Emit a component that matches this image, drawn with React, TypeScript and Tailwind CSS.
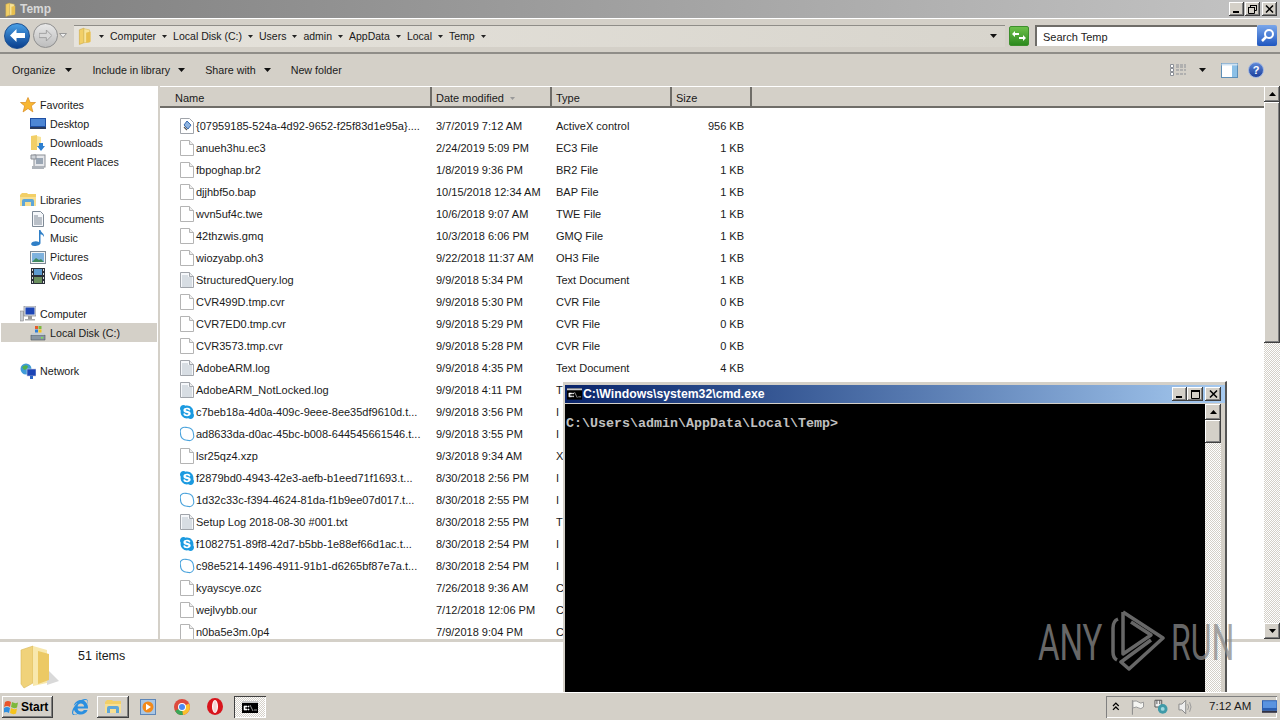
import React from "react";
import { FaSkype, FaInternetExplorer } from "react-icons/fa";

const raised = "shadow-[inset_-1px_-1px_0_#404040,inset_1px_1px_0_#ffffff,inset_-2px_-2px_0_#808080]";
const checker = "bg-[repeating-conic-gradient(#d4d0c8_0_25%,#ffffff_0_50%)] bg-[length:2px_2px]";

const Caret = ({ className = "" }: { className?: string }) => (
  <svg width="7" height="4" viewBox="0 0 7 4" className={"shrink-0 " + className}><path d="M0 0h7L3.5 4z" fill="#111" /></svg>
);
const SmallCaret = () => (
  <svg width="5" height="3" viewBox="0 0 5 3" className="shrink-0"><path d="M0 0h5L2.5 3z" fill="#222" /></svg>
);

const Folder = ({ size = 16 }: { size?: number }) => (
  <svg width={size} height={size} viewBox="0 0 16 16" className="shrink-0">
    <path d="M3 2.500 L7 1 V14 L3 15.500z" fill="#f2cf67" stroke="#c9a63e" strokeWidth=".5" />
    <path d="M7 1.500 L12 2.500 V13.500 L7 14z" fill="#f8e49a" stroke="#d7b755" strokeWidth=".5" />
    <path d="M9 5 L13 4 V13 L9 14z" fill="#e8bf4e" />
  </svg>
);

const BlankFile = () => (
  <svg width="14" height="16" viewBox="0 0 14 16" className="shrink-0">
    <path d="M.5.5h9l4 4v11H.5z" fill="#fff" stroke="#b4b4b4" />
    <path d="M9.500.5v4h4" fill="#eee" stroke="#b4b4b4" />
  </svg>
);
const TextFile = () => (
  <svg width="14" height="16" viewBox="0 0 14 16" className="shrink-0">
    <path d="M.5.5h9l4 4v11H.5z" fill="#f6f8fb" stroke="#a0a4aa" />
    <path d="M9.500.5v4h4" fill="#eee" stroke="#a0a4aa" />
    <path d="M2 4h6M2 6h10M2 8h10M2 10h10M2 12h10M2 14h10" stroke="#a9b4c0" strokeWidth=".8" />
  </svg>
);
const ActiveX = () => (
  <svg width="14" height="16" viewBox="0 0 14 16" className="shrink-0">
    <path d="M.5.5h9l4 4v11H.5z" fill="#fff" stroke="#a0a4aa" />
    <path d="M7 3l4 4-3 4-4-4z" fill="#8fb4e0" stroke="#3b6db0" />
    <path d="M4 9l3 3" stroke="#555" strokeWidth="1.200" />
  </svg>
);
const SkypeHollow = () => (
  <svg width="16" height="16" viewBox="0 0 16 16" className="shrink-0">
    <path d="M4 1.500C6 .8 7 1.500 8 1.500c4 0 6.500 3 6.500 6.500 0 1 .5 2 .2 3-.5 2.500-3 4-5 3.500-.7-.1-1.200-.3-1.700-.3-4 0-6.500-3-6.500-6.500 0-1-.5-1.500-.3-3C1.400 3 2.500 2 4 1.500z" fill="#fff" stroke="#4aa3dc" strokeWidth="1.100" />
  </svg>
);
const Skype = () => <FaSkype size={16} className="shrink-0 text-[#1b9ae0]" />;

type Icon = "blank" | "text" | "activex" | "skype" | "hollow";
const iconFor: Record<Icon, React.ReactNode> = {
  blank: <BlankFile />, text: <TextFile />, activex: <ActiveX />, skype: <Skype />, hollow: <SkypeHollow />,
};

const files: [Icon, string, string, string, string][] = [
  ["activex", "{07959185-524a-4d92-9652-f25f83d1e95a}....", "3/7/2019 7:12 AM", "ActiveX control", "956 KB"],
  ["blank", "anueh3hu.ec3", "2/24/2019 5:09 PM", "EC3 File", "1 KB"],
  ["blank", "fbpoghap.br2", "1/8/2019 9:36 PM", "BR2 File", "1 KB"],
  ["blank", "djjhbf5o.bap", "10/15/2018 12:34 AM", "BAP File", "1 KB"],
  ["blank", "wvn5uf4c.twe", "10/6/2018 9:07 AM", "TWE File", "1 KB"],
  ["blank", "42thzwis.gmq", "10/3/2018 6:06 PM", "GMQ File", "1 KB"],
  ["blank", "wiozyabp.oh3", "9/22/2018 11:37 AM", "OH3 File", "1 KB"],
  ["text", "StructuredQuery.log", "9/9/2018 5:34 PM", "Text Document", "1 KB"],
  ["blank", "CVR499D.tmp.cvr", "9/9/2018 5:30 PM", "CVR File", "0 KB"],
  ["blank", "CVR7ED0.tmp.cvr", "9/9/2018 5:29 PM", "CVR File", "0 KB"],
  ["blank", "CVR3573.tmp.cvr", "9/9/2018 5:28 PM", "CVR File", "0 KB"],
  ["text", "AdobeARM.log", "9/9/2018 4:35 PM", "Text Document", "4 KB"],
  ["text", "AdobeARM_NotLocked.log", "9/9/2018 4:11 PM", "T", ""],
  ["skype", "c7beb18a-4d0a-409c-9eee-8ee35df9610d.t...", "9/9/2018 3:56 PM", "I", ""],
  ["hollow", "ad8633da-d0ac-45bc-b008-644545661546.t...", "9/9/2018 3:55 PM", "I", ""],
  ["blank", "lsr25qz4.xzp", "9/3/2018 9:34 AM", "X", ""],
  ["skype", "f2879bd0-4943-42e3-aefb-b1eed71f1693.t...", "8/30/2018 2:56 PM", "I", ""],
  ["hollow", "1d32c33c-f394-4624-81da-f1b9ee07d017.t...", "8/30/2018 2:55 PM", "I", ""],
  ["text", "Setup Log 2018-08-30 #001.txt", "8/30/2018 2:55 PM", "T", ""],
  ["skype", "f1082751-89f8-42d7-b5bb-1e88ef66d1ac.t...", "8/30/2018 2:54 PM", "I", ""],
  ["hollow", "c98e5214-1496-4911-91b1-d6265bf87e7a.t...", "8/30/2018 2:54 PM", "I", ""],
  ["blank", "kyayscye.ozc", "7/26/2018 9:36 AM", "C", ""],
  ["blank", "wejlvybb.our", "7/12/2018 12:06 PM", "C", ""],
  ["blank", "n0ba5e3m.0p4", "7/9/2018 9:04 PM", "C", ""],
];

const crumbs = ["Computer", "Local Disk (C:)", "Users", "admin", "AppData", "Local", "Temp"];

const Star = () => (
  <svg width="16" height="16" viewBox="0 0 16 16"><path d="M8 .5l2.200 5h5.300l-4.200 3.400 1.600 6-4.900-3.400-4.900 3.400 1.600-6L.5 5.500h5.300z" fill="#f8b733" stroke="#d98a1e" strokeWidth=".7" /></svg>
);
const DesktopI = () => (
  <svg width="16" height="16" viewBox="0 0 16 16"><rect x="0" y="2" width="16" height="11" fill="#1f4fa3" /><rect x="1" y="3" width="14" height="7" fill="#4d86d4" /><rect x="0" y="11" width="16" height="2" fill="#2b3b5c" /></svg>
);
const Downloads = () => (
  <svg width="16" height="16" viewBox="0 0 16 16"><path d="M1 1l6-1v15H1z" fill="#f2cf67" /><path d="M7 1l4 1v10H7z" fill="#f8e49a" /><path d="M9 8h4v3h2l-4 5-4-5h2z" fill="#2d7fd0" /></svg>
);
const Recent = () => (
  <svg width="16" height="16" viewBox="0 0 16 16"><rect x="4" y="1" width="11" height="12" fill="#e4e6ea" stroke="#8b8f96" /><rect x="6" y="4" width="7" height="6" fill="#9aa6b4" /><path d="M1 1h5v4H1z" fill="#cfd3d8" stroke="#8b8f96" /><rect x="2" y="12" width="12" height="3" fill="#aeb3ba" /></svg>
);
const Libraries = () => (
  <svg width="16" height="16" viewBox="0 0 16 16"><path d="M0 3l2-2h5l1 1h8v3H0z" fill="#f2cf67" /><path d="M0 5h16v9H0z" fill="#f7df93" /><path d="M2 14V9q0-2 2-2h8q2 0 2 2v5h-3v-4H5v4z" fill="#5ea6d8" /></svg>
);
const Documents = () => (
  <svg width="16" height="16" viewBox="0 0 16 16"><path d="M2.500.5h8l3 3v12h-11z" fill="#f5f7fa" stroke="#7f8a96" /><path d="M4 5h4M4 7h8M4 9h8M4 11h8M4 13h8" stroke="#5f6d7c" strokeWidth=".8" /></svg>
);
const Music = () => (
  <svg width="16" height="16" viewBox="0 0 16 16"><path d="M9 0h1.500c.5 3 4 3 3.500 7-.8-1.500-2-2.500-3.500-2.700V13c0 2-3 3-6 3-3 0-4-1.500-3-3 1-1.500 4.500-2.500 7.500-1z" fill="#2f7fc7" /></svg>
);
const Pictures = () => (
  <svg width="16" height="16" viewBox="0 0 16 16"><rect x=".5" y="2.500" width="15" height="12" fill="#f1f3f5" stroke="#7f8a96" /><rect x="2" y="4" width="12" height="9" fill="#7fb2de" /><path d="M2 13l4-4 3 2 2-1 3 3z" fill="#3f8a5e" /></svg>
);
const Videos = () => (
  <svg width="16" height="16" viewBox="0 0 16 16"><rect x="1" y="0" width="14" height="16" fill="#2a2f38" /><rect x="4" y="1" width="8" height="6" fill="#5d9bd0" /><rect x="4" y="9" width="8" height="6" fill="#6a8f5e" /><path d="M2 1h1v2H2zM2 5h1v2H2zM2 9h1v2H2zM2 13h1v2H2zM13 1h1v2h-1zM13 5h1v2h-1zM13 9h1v2h-1zM13 13h1v2h-1z" fill="#ddd" /></svg>
);
const ComputerI = () => (
  <svg width="16" height="16" viewBox="0 0 16 16"><rect x="0" y="5" width="3.500" height="10" fill="#c9ccd1" stroke="#777" strokeWidth=".5" /><rect x="4" y="0" width="12" height="10" fill="#dfe2e6" stroke="#6d7075" strokeWidth=".6" /><rect x="5.500" y="1.500" width="9" height="7" fill="#1c45b6" /><rect x="8" y="10" width="4" height="3" fill="#999" /><rect x="5" y="13" width="10" height="1.500" fill="#aaa" /></svg>
);
const Disk = () => (
  <svg width="16" height="16" viewBox="0 0 16 16"><path d="M1 10h14v5H1z" fill="#8a97a3" stroke="#4b5560" strokeWidth=".6" /><path d="M2 8h12l1 2H1z" fill="#c4ccd3" /><rect x="5" y="1" width="3" height="3" fill="#e85a2a" /><rect x="8.500" y="1" width="3" height="3" fill="#7db83c" /><rect x="5" y="4.500" width="3" height="3" fill="#2f7fd8" /><rect x="8.500" y="4.500" width="3" height="3" fill="#f3c21c" /><rect x="11" y="12" width="2" height="1.500" fill="#7de05a" /></svg>
);
const NetworkI = () => (
  <svg width="16" height="16" viewBox="0 0 16 16"><circle cx="6" cy="6" r="5.500" fill="#3f9bd8" /><path d="M2 4q3-3 6-1l-1 3-3 1z" fill="#4fb04f" /><rect x="7" y="6" width="9" height="7" fill="#1c45b6" stroke="#ccd" strokeWidth=".6" /><rect x="10" y="13" width="3" height="3" fill="#2a66c8" /></svg>
);

const Nav = ({ icon, label, group, active }: { icon: React.ReactNode; label: string; group?: boolean; active?: boolean }) => (
  <div className={"h-[19px] flex items-center gap-1 " + (group ? "pl-5" : active ? "pl-[29px] bg-[#d4d0c8] mx-px" : "pl-[30px]")}>
    <span className="w-4 h-4 shrink-0">{icon}</span>
    <span className="whitespace-nowrap pt-px text-[10.7px]">{label}</span>
  </div>
);

const WinBtn = ({ children, w = "w-[15px]" }: { children: React.ReactNode; w?: string }) => (
  <div className={"h-[14px] bg-[#d4d0c8] flex items-center justify-center " + w + " " + raised}>{children}</div>
);
const MinG = () => <div className="w-[6px] h-[2px] bg-black mt-[6px] -ml-[1px]" />;
const RestoreG = () => (
  <svg width="9" height="9" viewBox="0 0 9 9"><path d="M2.500 2V.5h6v5H7M.5 2.500h6v6h-6z" fill="none" stroke="#000" /><path d="M0 2h7v1H0zM2 0h7v1H2z" /></svg>
);
const MaxG = () => (
  <svg width="9" height="9" viewBox="0 0 9 9"><path d="M.5.5h8v8h-8z" fill="none" stroke="#000" /><path d="M0 0h9v2H0z" /></svg>
);
const CloseG = () => (
  <svg width="9" height="8" viewBox="0 0 9 8"><path d="M1 .5L8 7.500M8 .5L1 7.500" stroke="#000" strokeWidth="1.500" /></svg>
);
const ScrollUp = () => (
  <div className={"h-4 w-4 bg-[#d4d0c8] flex items-center justify-center " + raised}>
    <svg width="7" height="4" viewBox="0 0 7 4"><path d="M0 4h7L3.500 0z" /></svg>
  </div>
);
const ScrollDown = () => (
  <div className={"h-4 w-4 bg-[#d4d0c8] flex items-center justify-center " + raised}>
    <svg width="7" height="4" viewBox="0 0 7 4"><path d="M0 0h7L3.500 4z" /></svg>
  </div>
);

const Header = ({ label, w, sort, pad = "pl-[4px]" }: { label: string; w: string; sort?: boolean; pad?: string }) => (
  <div className={"h-full flex items-center pt-[3px] gap-[6px] border-r-2 border-r-[#6f6d68] " + pad + " " + w}>
    <span>{label}</span>
    {sort && <svg width="5" height="3" viewBox="0 0 5 3"><path d="M0 0h5L2.500 3z" fill="#999" /></svg>}
  </div>
);

const Chrome = () => (
  <svg width="16" height="16" viewBox="0 0 16 16">
    <circle cx="8" cy="8" r="8" fill="#dd4b3e" />
    <path d="M8 8L1 12a8 8 0 0 0 8 4z" fill="#3aa757" />
    <path d="M8 8l7-3.500A8 8 0 0 1 9 16z" fill="#fbc02d" />
    <circle cx="8" cy="8" r="4" fill="#fff" /><circle cx="8" cy="8" r="3" fill="#4a8af4" />
  </svg>
);
const Opera = () => (
  <svg width="16" height="17" viewBox="0 0 16 17">
    <ellipse cx="8" cy="8.500" rx="8" ry="8.500" fill="#d8141c" />
    <ellipse cx="8" cy="8.500" rx="3" ry="6.500" fill="#fff" />
    <ellipse cx="8" cy="8.500" rx="1.800" ry="5.500" fill="#f4d5d5" />
  </svg>
);
const Media = () => (
  <svg width="16" height="16" viewBox="0 0 16 16">
    <rect x=".5" y=".5" width="15" height="15" fill="#a9c6e4" stroke="#5d86b8" />
    <circle cx="8" cy="8" r="5.500" fill="#f28a1c" />
    <path d="M6 4.800v6.400L11 8z" fill="#fff" />
  </svg>
);
const WinFlag = () => (
  <svg width="17" height="16" viewBox="0 0 17 16" className="shrink-0">
    <path d="M1 3q3-2 6 0l-1 5q-3-2-6 0z" fill="#e9552b" />
    <path d="M8 3q3 2 6 .5l-1 5q-3 1.500-6-.5z" fill="#7db83c" />
    <path d="M0 9q3-2 6 0l-1 5q-3-2-6 0z" fill="#2f8fe0" />
    <path d="M7 9q3 2 6 .5l-1 5q-3 1.500-6-.5z" fill="#f5c31c" />
  </svg>
);
const CmdSmall = ({ w = 16, h = 12 }: { w?: number; h?: number }) => (
  <svg width={w} height={h} viewBox="0 0 16 12" className="shrink-0">
    <rect width="16" height="12" fill="#000" />
    <rect width="16" height="2" fill="#c8c8c8" />
    <path d="M2 5h3v1H3v2h2v1H2zM6 5h1v1H6zM6 8h1v1H6zM8 4l3 6M12 9h3" stroke="#fff" strokeWidth=".6" fill="#fff" />
  </svg>
);

export default function App() {
  return (
    <div className="relative w-[1280px] h-[720px] overflow-hidden flex flex-col bg-[#d4d0c8] text-[#1a1a1a] text-[11px] leading-none font-['Liberation_Sans',sans-serif]">
      {/* title bar */}
      <div className="h-[18px] shrink-0 flex items-center bg-gradient-to-r from-[#808080] to-[#c4c4c4]">
        <div className="w-[20px] flex justify-start pl-[3px]"><Folder size={15} /></div>
        <span className="font-bold text-[12px] text-[#d8d8d8]">Temp</span>
        <div className="ml-auto flex items-center mr-[3px]">
          <WinBtn><MinG /></WinBtn>
          <div className="w-px" />
          <WinBtn><RestoreG /></WinBtn>
          <div className="w-[2px]" />
          <WinBtn><CloseG /></WinBtn>
        </div>
      </div>

      {/* address bar */}
      <div className="h-[36px] shrink-0 flex items-center border-t border-t-[#fff] border-b-2 border-b-[#8f8d88] pl-[4px] pr-[3px]">
        <div className="w-[26px] h-[26px] rounded-full bg-gradient-to-b from-[#4aa0e6] to-[#0b3f8e] border border-[#1c4f90] flex items-center justify-center shrink-0">
          <svg width="15" height="13" viewBox="0 0 15 13"><path d="M0 6.500L6.500 0v4H15v5H6.500v4z" fill="#fff" /></svg>
        </div>
        <div className="w-[25px] h-[25px] rounded-full ml-[3px] bg-gradient-to-b from-[#e8e8e8] to-[#bdbdbd] border border-[#8f8f8f] flex items-center justify-center shrink-0">
          <svg width="13" height="11" viewBox="0 0 15 13"><path d="M15 6.500L8.500 0v4H0v5h8.500v4z" fill="#d8d8d8" stroke="#999" /></svg>
        </div>
        <svg width="8" height="5" viewBox="0 0 8 5" className="ml-[1px] mr-[7px] shrink-0"><path d="M.5.5h7L4 4.500z" fill="#eee" stroke="#999" /></svg>
        <div className="w-[931px] h-[22px] shrink-0 flex items-center border-t border-t-[#8f8d88] bg-gradient-to-r from-[#e6e3dc] to-[#d8d5cd] pl-[2px] pr-2">
          <Folder size={18} />
          <div className="flex items-center ml-[5px] gap-[6px]">
            {crumbs.map((c) => (
              <React.Fragment key={c}>
                <SmallCaret />
                <span className="pt-px whitespace-nowrap text-[10.5px]">{c}</span>
              </React.Fragment>
            ))}
            <SmallCaret />
          </div>
          <Caret className="ml-auto" />
        </div>
        <div className="w-[20px] h-[20px] ml-[4px] shrink-0 rounded-[2px] bg-gradient-to-b from-[#6cc04a] to-[#2c8a1e] border border-[#3d8f2c] flex items-center justify-center">
          <svg width="14" height="12" viewBox="0 0 14 12"><path d="M0 4l3-3v2h4v2H3v2zM14 8l-3 3V9H7V7h4V5z" fill="#fff" /></svg>
        </div>
        <div className="w-[222px] h-[21px] ml-[6px] shrink-0 bg-white flex items-center pl-[6px] pt-px border-t-2 border-l-2 border-t-[#6f6d68] border-l-[#6f6d68] text-[#222]">Search Temp</div>
        <div className="w-[20px] h-[21px] shrink-0 rounded-[2px] bg-gradient-to-b from-[#79a6ea] to-[#1f56c0] flex items-center justify-center">
          <svg width="15" height="15" viewBox="0 0 15 15"><circle cx="9" cy="6" r="4" fill="none" stroke="#fff" strokeWidth="2" /><path d="M6 9l-4 4" stroke="#fff" strokeWidth="2.500" /></svg>
        </div>
      </div>

      {/* toolbar */}
      <div className="h-[32px] shrink-0 flex items-center pl-3 pr-4 text-[10.7px]">
        <span className="pt-px">Organize</span><Caret className="ml-[10px] mr-[20px]" />
        <span className="pt-px">Include in library</span><Caret className="ml-[8px] mr-[20px]" />
        <span className="pt-px">Share with</span><Caret className="ml-[8px] mr-[20px]" />
        <span className="pt-px">New folder</span>
        <div className="ml-auto flex items-center">
          <svg width="16" height="14" viewBox="0 0 16 14"><path d="M.5 1.500h3v3h-3zM.5 5.500h3v3h-3zM.5 9.500h3v3h-3z" fill="#fff" stroke="#8b8f96" /><path d="M6 2h10M6 4h10M6 7h10M6 11h10" stroke="#8b8f96" strokeDasharray="3 1" /></svg>
          <Caret className="ml-[13px] mr-[15px]" />
          <svg width="17" height="15" viewBox="0 0 17 15"><rect x=".5" y=".5" width="16" height="14" fill="#fff" stroke="#5d8fb8" /><rect x="11" y="1" width="5" height="13" fill="#8cc0e6" /><rect x=".5" y=".5" width="16" height="2" fill="#cfe2f2" /></svg>
          <div className="w-[16px] h-[16px] ml-[10px] rounded-full bg-gradient-to-b from-[#5d87d8] to-[#1e3f9c] border border-[#9db4e0] text-white font-bold text-[11px] flex items-center justify-center">?</div>
        </div>
      </div>

      {/* main */}
      <div className="h-[553px] shrink-0 flex bg-white overflow-hidden">
        <div className="w-[158px] shrink-0 pt-[9px] flex flex-col">
          <Nav group icon={<Star />} label="Favorites" />
          <Nav icon={<DesktopI />} label="Desktop" />
          <Nav icon={<Downloads />} label="Downloads" />
          <Nav icon={<Recent />} label="Recent Places" />
          <div className="h-[19px]" />
          <Nav group icon={<Libraries />} label="Libraries" />
          <Nav icon={<Documents />} label="Documents" />
          <Nav icon={<Music />} label="Music" />
          <Nav icon={<Pictures />} label="Pictures" />
          <Nav icon={<Videos />} label="Videos" />
          <div className="h-[19px]" />
          <Nav group icon={<ComputerI />} label="Computer" />
          <Nav active icon={<Disk />} label="Local Disk (C:)" />
          <div className="h-[19px]" />
          <Nav group icon={<NetworkI />} label="Network" />
        </div>
        <div className="w-[2px] shrink-0 bg-[#d4d0c8]" />
        <div className="flex-1 min-w-0 flex flex-col">
          <div className="h-[22px] shrink-0 flex bg-[#d4d0c8] border-t border-t-white border-b-2 border-b-[#6f6d68] pl-[10px]">
            <Header label="Name" w="w-[262px]" pad="pl-[5px]" />
            <Header label="Date modified" w="w-[120px]" sort />
            <Header label="Type" w="w-[120px]" />
            <Header label="Size" w="w-[80px]" />
          </div>
          <div className="pt-[7px] overflow-hidden pl-[20px]">
            {files.map((f) => (
              <div key={f[1]} className="h-[22px] flex items-center">
                <div className="w-[256px] shrink-0 flex items-center gap-[2px] overflow-hidden whitespace-nowrap">
                  <span className="w-[14px] flex justify-center">{iconFor[f[0]]}</span>
                  <span>{f[1]}</span>
                </div>
                <div className="w-[120px] shrink-0 whitespace-nowrap">{f[2]}</div>
                <div className="w-[120px] shrink-0 whitespace-nowrap">{f[3]}</div>
                <div className="w-[68px] shrink-0 text-right whitespace-nowrap">{f[4]}</div>
              </div>
            ))}
          </div>
        </div>
        <div className={"w-4 shrink-0 flex flex-col " + checker}>
          <ScrollUp />
          <div className={"h-[241px] w-4 bg-[#d4d0c8] " + raised} />
          <div className="flex-1" />
          <ScrollDown />
        </div>
      </div>

      {/* details */}
      <div className="h-[53px] shrink-0 flex border-t-[3px] border-t-[#d4d0c8] bg-white">
        <div className="pl-[20px] pt-[3px] w-[78px] shrink-0">
          <svg width="40" height="46" viewBox="0 0 40 46">
            <path d="M1 5L13 1v37L4 43 1 39z" fill="#f0d27a" stroke="#d9b85c" strokeWidth=".6" />
            <path d="M13 1l14 4v33l-14 3z" fill="#f8e8ad" />
            <path d="M27 24l12 12-12 4z" fill="#d9d9d9" />
            <path d="M18 6l11 3v26l-11 4z" fill="#ecc964" />
          </svg>
        </div>
        <span className="pt-[8px] text-[12.5px]">51 items</span>
      </div>

      {/* taskbar */}
      <div className="h-[28px] shrink-0 flex items-center border-t border-t-white pl-[2px] pr-[3px]">
        <div className={"w-[51px] h-[22px] shrink-0 bg-[#d4d0c8] flex items-center pl-[2px] font-bold text-[12px] text-black " + raised}>
          <WinFlag /><span>Start</span>
        </div>
        <div className="w-[19px]" />
        <FaInternetExplorer size={16} className="text-[#2a8fe0] shrink-0" />
        <div className="w-[9px]" />
        <div className={"w-[32px] h-[22px] shrink-0 bg-[#d4d0c8] flex items-center justify-center " + raised}><Libraries /></div>
        <div className="w-[11px]" />
        <Media />
        <div className="w-[18px]" />
        <Chrome />
        <div className="w-[17px]" />
        <Opera />
        <div className="w-[11px]" />
        <div className={"w-[32px] h-[22px] shrink-0 flex items-center justify-center shadow-[inset_1px_1px_0_#404040,inset_-1px_-1px_0_#ffffff] " + checker}>
          <CmdSmall />
        </div>
        <div className="ml-auto w-[171px] h-[22px] shrink-0 flex items-center shadow-[inset_1px_1px_0_#808080,inset_-1px_-1px_0_#ffffff] pl-[6px]">
          <svg width="8" height="9" viewBox="0 0 8 9"><path d="M1 4l3-3 3 3M1 8l3-3 3 3" fill="none" stroke="#000" strokeWidth="1.300" /></svg>
          <svg width="16" height="16" viewBox="0 0 16 16" className="ml-[10px]"><path d="M2.500 1v15" stroke="#888" /><path d="M3 2q4-1 6 1t5 0v5q-3 3-5 1t-6 0z" fill="#f5f5f2" stroke="#999" /></svg>
          <svg width="16" height="16" viewBox="0 0 16 16" className="ml-[9px]"><path d="M1 1h7v7H1z" fill="#f0f0f0" stroke="#555" /><path d="M3 1v4M6 1v4" stroke="#555" /><circle cx="9" cy="10" r="5" fill="#3f9aa8" /><circle cx="9" cy="10" r="2" fill="#9fd8df" /></svg>
          <svg width="16" height="16" viewBox="0 0 16 16" className="ml-[8px]"><path d="M1 5h3l4-4v14l-4-4H1z" fill="#eee" stroke="#888" /><path d="M10 5q2 3 0 6M12 3q3 5 0 10" fill="none" stroke="#999" /></svg>
          <span className="ml-[16px] whitespace-nowrap text-[11.5px] w-[44px]">7:12 AM</span>
          <svg width="16" height="14" viewBox="0 0 16 14" className="ml-[10px]"><rect width="16" height="11" fill="#2a5db0" /><rect x="1" y="1" width="14" height="7" fill="#5a93e0" /><rect y="11" width="16" height="2" fill="#334" /></svg>
        </div>
      </div>

      {/* cmd window */}
      <div className="absolute left-[563px] top-[381px] w-[664px] h-[311px] flex flex-col bg-[#d4d0c8] border-t border-t-white border-r-2 border-r-[#555] pl-[2px] pt-[3px]">
        <div className="h-[18px] shrink-0 flex items-center bg-gradient-to-r from-[#0a246a] to-[#a6caf0] pl-[2px] pr-[4px]">
          <CmdSmall w={15} h={12} />
          <span className="ml-[1px] text-white font-bold text-[12.25px]">C:\Windows\system32\cmd.exe</span>
          <div className="ml-auto flex items-center">
            <WinBtn w="w-[15px]"><MinG /></WinBtn>
            <WinBtn w="w-[16px]"><MaxG /></WinBtn>
            <div className="w-[2px]" />
            <WinBtn w="w-[16px]"><CloseG /></WinBtn>
          </div>
        </div>
        <div className="flex-1 min-h-0 flex mt-[1px] pr-[4px]">
          <div className="w-[640px] shrink-0 bg-black pt-[13px] pl-[1px] text-[#c0c0c0] text-[13.33px] leading-none font-semibold font-['Liberation_Mono',monospace] whitespace-pre">{"C:\\Users\\admin\\AppData\\Local\\Temp>"}</div>
          <div className={"w-4 shrink-0 flex flex-col " + checker}>
            <ScrollUp />
            <div className={"h-[23px] w-4 bg-[#d4d0c8] " + raised} />
          </div>
        </div>
      </div>

      {/* watermark */}
      <div className="absolute left-[1038px] top-[608px] flex items-center pointer-events-none text-[#8a8a8a] opacity-75 font-['Roboto',sans-serif] font-normal text-[50px] leading-none">
        <span className="inline-block w-[66px] whitespace-nowrap origin-left scale-x-[0.66] translate-y-[3px]">ANY</span>
        <svg width="56" height="64" viewBox="0 0 56 64" className="ml-[5px]" fill="none" stroke="#8a8a8a" strokeWidth="3.500" strokeLinejoin="round">
          <path d="M9 11Q4 13 4 20V44Q4 50 8 52" />
          <path d="M14 4V46L42 27 22 14" />
          <path d="M14 4L54 30 20 61 12 54 42 32" />
        </svg>
        <span className="inline-block w-[60px] ml-[6px] whitespace-nowrap origin-left scale-x-[0.64] translate-y-[3px]">RUN</span>
      </div>
    </div>
  );
}
